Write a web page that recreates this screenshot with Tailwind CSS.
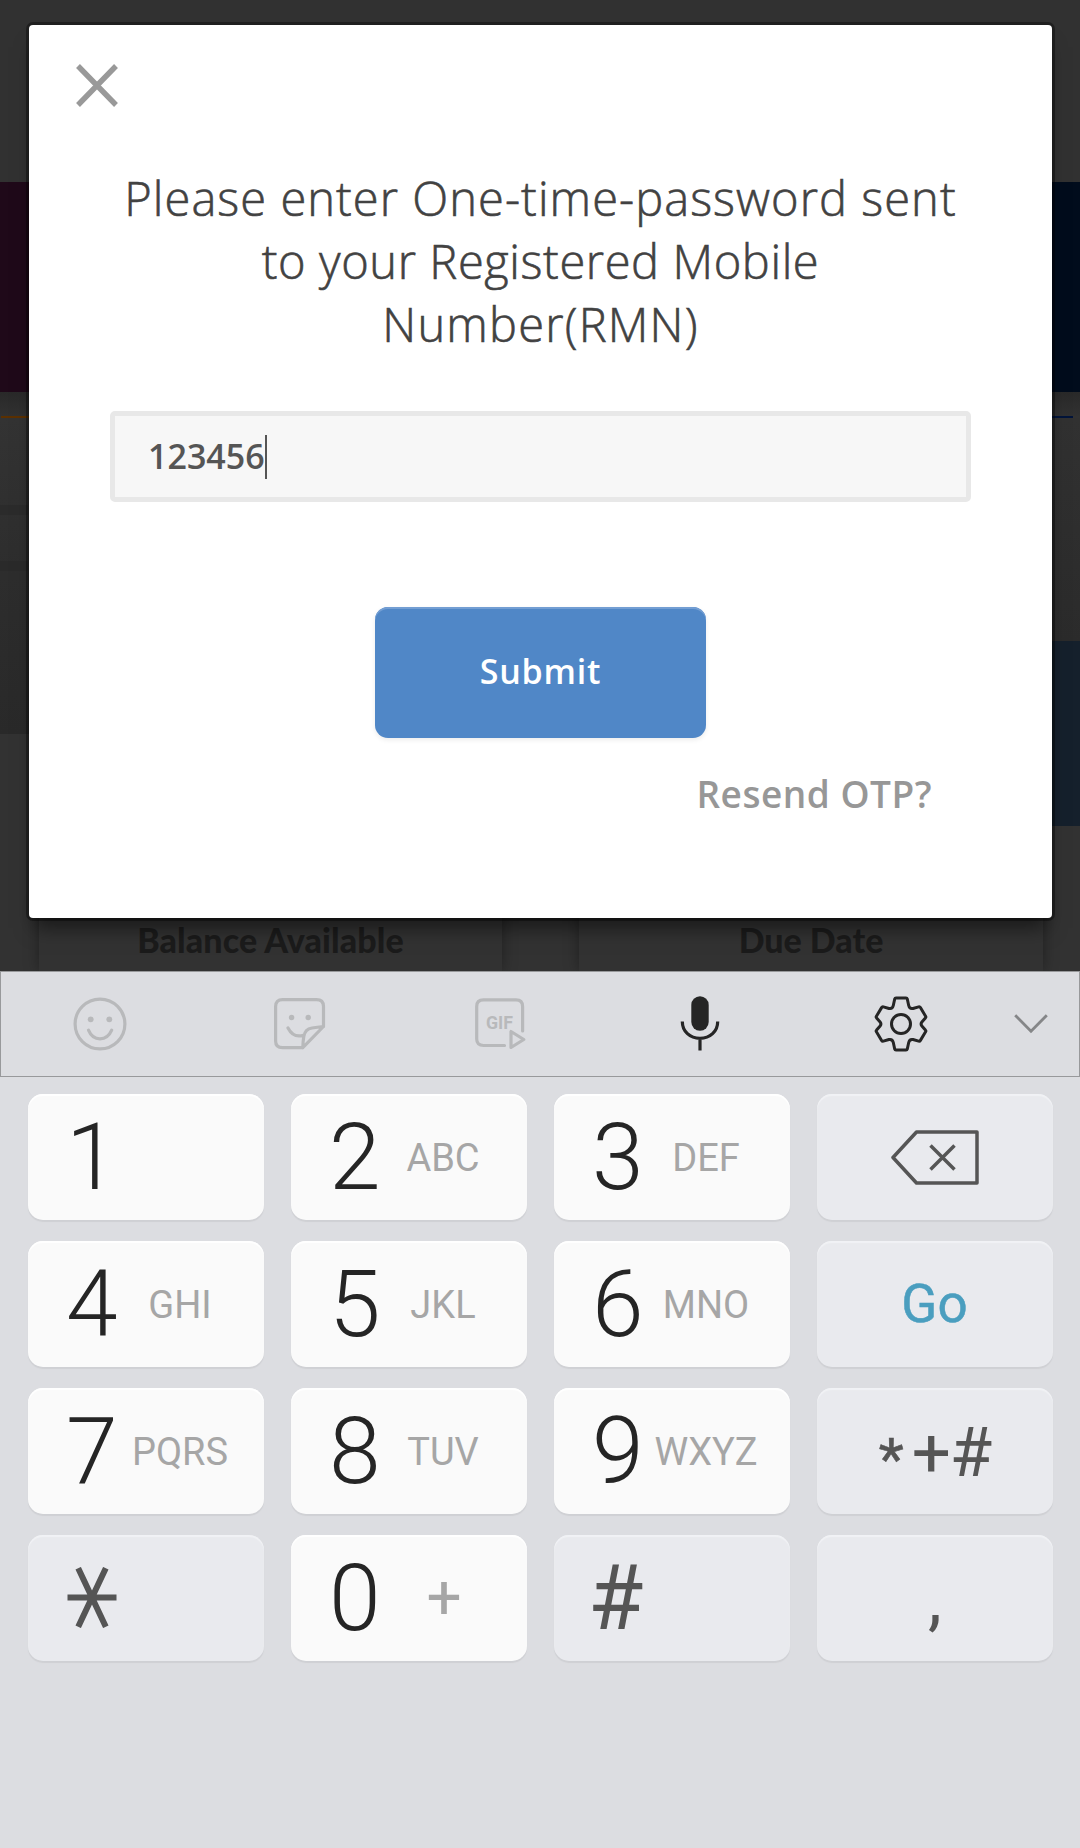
<!DOCTYPE html>
<html lang="en">
<head>
<meta charset="utf-8">
<title>One-time password</title>
<script src="https://cdn.jsdelivr.net/npm/@tailwindcss/browser@4"></script>
</head>
<body class="bg-[#dcdde1]">
<div class="flex h-[1848px] w-[1080px] flex-col overflow-hidden">

  <main class="relative h-[971px] shrink-0 overflow-hidden bg-[#323232]">
    <!-- dimmed page behind the dialog -->
    <div class="absolute inset-0 flex">
      <div class="flex w-1/2 flex-col">
        <div class="h-[182px] bg-[#313131]"></div>
        <div class="h-[210px] bg-[#1f0919]"></div>
        <div class="h-6 bg-linear-to-b from-[#292929] to-[#313131]"></div>
        <div class="ml-px h-0.5 bg-[#5b3000]"></div>
        <div class="flex h-[316px] flex-col bg-linear-to-b from-[#333333] via-[#2d2d2d] to-[#292929] pt-[87px]">
          <div class="h-2.5 w-7 bg-[#2b2b2b]"></div>
          <div class="mt-[46px] h-2.5 w-7 bg-[#2a2a2a]"></div>
        </div>
      </div>
      <div class="flex w-1/2 flex-col">
        <div class="h-[182px] bg-[#313131]"></div>
        <div class="h-[210px] bg-[#010c1c]"></div>
        <div class="h-6 bg-linear-to-b from-[#292929] to-[#313131]"></div>
        <div class="mr-[7px] h-0.5 bg-[#02143a]"></div>
        <div class="h-[223px] bg-linear-to-b from-[#313131] to-[#2b2b2b]"></div>
        <div class="h-[185px] bg-[#15202c]"></div>
      </div>
    </div>
    <div class="absolute inset-x-0 bottom-0 flex gap-[77px] pl-[39px] font-['Lato'] text-[34px] leading-[42px] font-black text-[#1b1b1b]">
      <div class="h-[71px] w-[463px] bg-[#323232] pt-[19px] text-center tracking-[0.1px] shadow-[0_0_14px_rgba(0,0,0,0.35)]">Balance Available</div>
      <div class="h-[71px] w-[464px] bg-[#323232] pt-[19px] text-center shadow-[0_0_14px_rgba(0,0,0,0.35)]">Due Date</div>
    </div>

    <!-- dialog -->
    <section class="absolute top-[25px] left-[29px] flex h-[893px] w-[1023px] flex-col rounded-sm bg-white font-['Open_Sans'] shadow-[0_0_0_3px_rgba(0,0,0,0.35),0_16px_18px_-6px_rgba(0,0,0,0.5)]">
      <svg class="mt-[39px] ml-[47px] h-[43px] w-[42px] shrink-0" viewBox="0 0 42 43" fill="none" stroke="#999" stroke-width="5.4"><path d="M2 2 40 41M40 2 2 41"/></svg>
      <h1 class="mt-[60px] text-center text-[47px] leading-[63px] font-light whitespace-nowrap text-[#424242] [-webkit-text-stroke:0.6px_#424242]">
        <span class="block tracking-[1.05px]">Please enter One-time-password sent</span>
        <span class="block tracking-[0.6px]">to your Registered Mobile</span>
        <span class="block tracking-[1.2px]">Number(RMN)</span>
      </h1>
      <div class="mx-[81px] mt-[55px] flex h-[91px] items-center rounded-[5px] border-5 border-[#e8e8e8] bg-[#f7f7f7] pl-[33px]">
        <span class="pb-0.5 text-[34px] leading-[44px] font-semibold text-[#555]">123456</span>
        <span class="h-11 w-0.5 bg-[#555]"></span>
      </div>
      <button class="mt-[105px] flex h-[131px] w-[331px] items-center justify-center self-center rounded-[13px] pb-0.5 bg-[#5087c7] text-[34px] font-semibold tracking-[0.8px] text-white shadow-[inset_0_2px_0_#739ed3,0_2px_5px_rgba(0,0,0,0.08)]">Submit</button>
      <a class="mt-[31px] mr-[120px] self-end text-[37px] leading-[50px] font-semibold tracking-[0.5px] text-[#979797]">Resend OTP?</a>
    </section>
  </main>

  <!-- keyboard -->
  <div class="flex-1 bg-[#dcdde1] font-['Roboto']">
    <div class="flex h-[106px] items-center border border-[#98999b]">
      <div class="flex w-[197px] justify-center">
        <svg class="h-[54px] w-[54px]" viewBox="0 0 54 54" fill="none" stroke="#b8b9bb" stroke-width="3.2" stroke-linecap="round"><circle cx="27" cy="27" r="24.9"/><path d="M15.5 33.2Q19 41.8 27 41.8T38.700 33.200"/><g fill="#b8b9bb" stroke="none"><circle cx="17.700" cy="22.300" r="2.900"/><circle cx="36.300" cy="22.300" r="2.900"/></g></svg>
      </div>
      <div class="flex w-[203px] justify-center">
        <svg class="h-[52px] w-[52px]" viewBox="0 0 52 52" fill="none" stroke="#b8b9bb" stroke-width="3.2" stroke-linecap="round" stroke-linejoin="round"><path d="M28.800 49.700H8.500Q1.600 49.700 1.600 43V8.500Q1.600 1.700 8.500 1.700H42.500Q49.500 1.700 49.500 8.500V28.500L28.800 49.700Q29 43 29.800 38.500Q31 31 38 30Q43 29.300 49.500 28.700M14 30Q19.500 40.500 29.500 37.200"/><g fill="#b8b9bb" stroke="none"><circle cx="17.600" cy="19.500" r="2.700"/><circle cx="34.200" cy="19.500" r="2.700"/></g></svg>
      </div>
      <div class="flex w-[199px] justify-center">
        <svg class="h-[52px] w-[52px]" viewBox="0 0 52 52" fill="none" stroke="#b8b9bb" stroke-width="3.2" stroke-linecap="round" stroke-linejoin="round"><path d="M29.500 47.500H8.500Q1.700 47.500 1.700 41V8.500Q1.700 1.900 8.500 1.900H41Q47.600 1.900 47.600 8.500V33M36 33.500V49.500L48.800 41.500Z"/><text x="11" y="31" fill="#b8b9bb" stroke="none" font-family="Roboto" font-weight="700" font-size="17.500" textLength="27" lengthAdjust="spacingAndGlyphs">GIF</text></svg>
      </div>
      <div class="flex w-[200px] justify-center">
        <svg class="h-[55px] w-[40px] mb-px" viewBox="0 0 40 55" fill="none" stroke="#252525" stroke-width="3.200"><rect x="11.300" y="0.300" width="17.400" height="34.400" rx="8.700" fill="#252525" stroke="none"/><path d="M2.300 25.500C2.300 35.500 10 42.300 20 42.300S37.700 35.500 37.700 25.500M20 42.500V54.500"/></svg>
      </div>
      <div class="flex w-[202px] justify-center">
        <svg class="h-[60px] w-[60px]" viewBox="0 0 60 60" fill="none" stroke="#252525" stroke-width="3" stroke-linejoin="round"><circle cx="30" cy="30" r="9.500"/><path d="M25 4H35Q36 4 36.300 5L37.700 11.500Q38.500 15.100 42 14.500L47.600 12.900Q48.800 12.600 49.400 13.600L54.600 22.200Q55.200 23.200 54.400 24L50.900 28Q49.300 30 50.900 32L54.400 36Q55.200 36.800 54.600 37.800L49.400 46.400Q48.800 47.400 47.600 47.100L42 45.500Q38.500 44.900 37.700 48.500L36.300 55Q36 56 35 56H25Q24 56 23.700 55L22.300 48.500Q21.500 44.900 18 45.500L12.400 47.100Q11.200 47.400 10.600 46.400L5.400 37.800Q4.800 36.800 5.600 36L9.100 32Q10.700 30 9.100 28L5.600 24Q4.800 23.200 5.400 22.200L10.600 13.600Q11.200 12.600 12.400 12.900L18 14.500Q21.500 15.100 22.300 11.500L23.700 5Q24 4 25 4Z"/></svg>
      </div>
      <div class="flex w-[58px] justify-center">
        <svg class="h-5 w-[34px]" viewBox="0 0 34 20" fill="none" stroke="#858688" stroke-width="2.800"><path d="M1.200 1.200 17 17.200 32.800 1.200"/></svg>
      </div>
    </div>

    <div class="grid grid-cols-4 gap-x-[27px] gap-y-[21px] pt-[17px] pr-[27px] pl-7" id="keys"></div>
  </div>
</div>

<script>
  const keyBase = "flex h-[126px] items-center rounded-[15px] ";
  const light = keyBase + "bg-[#fafafa] shadow-[inset_0_2px_1px_#ffffff,0_2px_1px_#cfd0d4] pl-[38px] pt-px";
  const dim = keyBase + "bg-[#e9eaee] shadow-[inset_0_2px_1px_#f1f2f5,0_2px_1px_#cfd0d4] text-[#555]";
  const digit = (n, letters) =>
    `<div class="${light}"><span class="w-[52px] text-[93px] leading-none font-light text-[#252525]">${n}</span>` +
    `<span class="flex-1 text-center ${letters === "+" ? "pr-[20px] pb-1 text-[62px]" : "pr-[22px] text-[38px]"} leading-none text-[#a6a6a6]">${letters}</span></div>`;
  const fn = (body, extra) => `<div class="${dim} ${extra}">${body}</div>`;

  document.getElementById("keys").innerHTML = [
    digit(1, ""), digit(2, "ABC"), digit(3, "DEF"),
    fn(`<svg class="h-[55px] w-[88px]" viewBox="0 0 88 55" fill="none" stroke="#555" stroke-width="3.500" stroke-linejoin="round"><path d="M2 27.500 25.500 2H86V53H25.500ZM39.500 15.500 63.500 39.500M63.500 15.500 39.500 39.500"/></svg>`, "justify-center"),
    digit(4, "GHI"), digit(5, "JKL"), digit(6, "MNO"),
    fn(`<span class="text-[53px] leading-none text-[#4a9ebf] [-webkit-text-stroke:0.5px_#4a9ebf]">Go</span>`, "justify-center pr-px"),
    digit(7, "PQRS"), digit(8, "TUV"), digit(9, "WXYZ"),
    fn(`<span class="mr-2 pt-4 text-[58px] leading-none [-webkit-text-stroke:0.6px_#555]">*</span><span class="pt-0.5 text-[69px] leading-none tracking-[-1px]">+#</span>`, "justify-center"),
    fn(`<svg class="mb-0.5 h-[61px] w-[50px]" viewBox="0 0 50 61" stroke="#555" stroke-width="6"><path d="M0.500 30.500H49.500M11.200 1.200 38.800 59.800M38.800 1.200 11.200 59.800"/></svg>`, "pl-[38.500px]"),
    digit(0, "+"),
    fn(`<span class="text-[90px] leading-none">#</span>`, "pl-[34px] pt-0.5"),
    fn(`<span class="text-[70px] leading-none">,</span>`, "justify-center pt-px")
  ].join("");
</script>
</body>
</html>
